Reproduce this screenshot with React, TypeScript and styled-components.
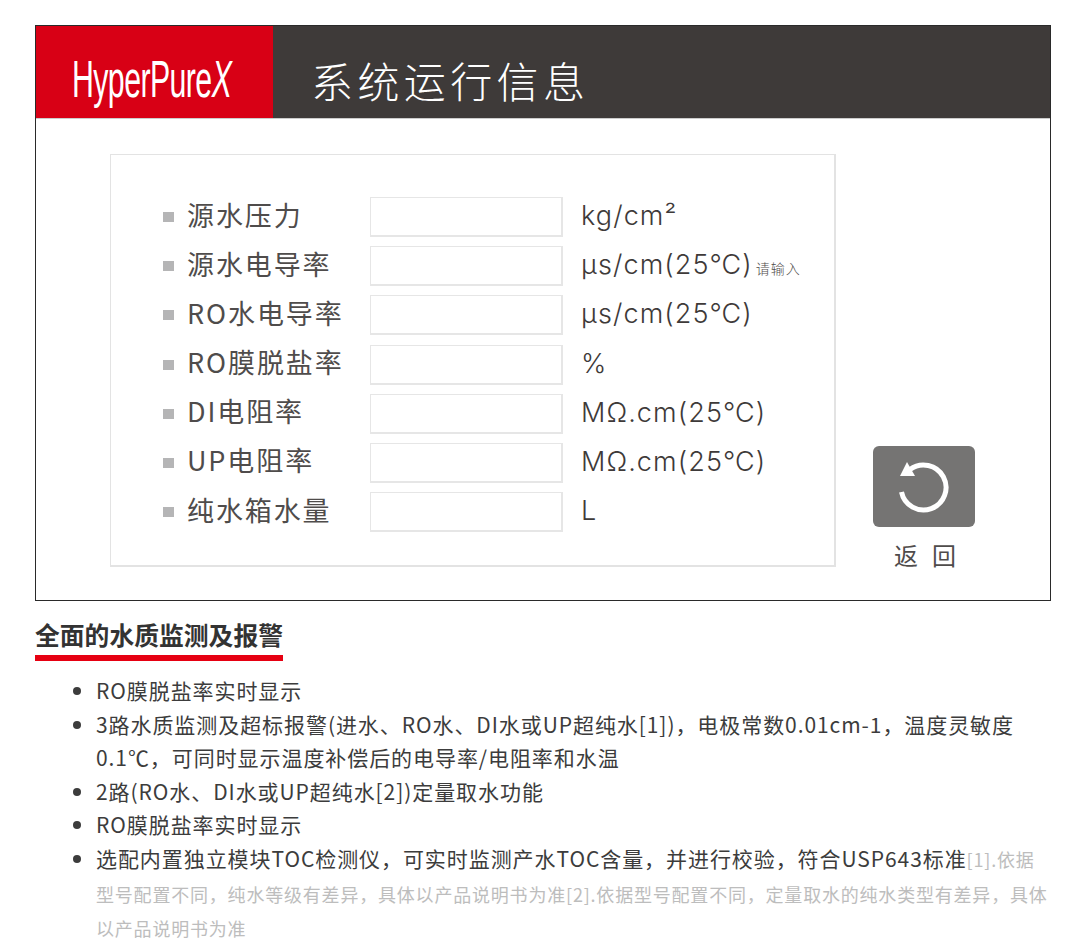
import React from "react";
import styled, { createGlobalStyle } from "styled-components";

const Global = createGlobalStyle`
  html, body { margin: 0; padding: 0; background: #fff; }
  body { font-family: "Noto Sans CJK SC", sans-serif; color: #3c3c3c; }
`;
const Page = styled.div`
  width: 1090px;
  height: 952px;
  padding: 25px 0 0 35px;
  box-sizing: border-box;
  overflow: hidden;
`;
const Frame = styled.section`
  width: 1016px;
  height: 576px;
  box-sizing: border-box;
  border: 1px solid #2a2a2a;
  display: flex;
  flex-direction: column;
`;
const Header = styled.header`
  height: 92px;
  flex: none;
  display: flex;
  background: #3e3a39;
  border-bottom: 1px solid #ccc;
  box-sizing: content-box;
`;
const Logo = styled.div`
  width: 237px;
  flex: none;
  background: #d80015;
  display: flex;
  align-items: center;
  justify-content: center;
  overflow: hidden;
`;
const LogoText = styled.span`
  display: inline-block;
  font-family: "Liberation Sans", sans-serif;
  font-size: 52px;
  line-height: 1;
  color: #fff;
  white-space: nowrap;
  letter-spacing: -1px;
  transform: translate(-3px, 7px) scaleX(0.583);
  em { font-style: italic; }
`;
const Title = styled.h1`
  margin: 0 0 0 38px;
  padding-top: 15px;
  font-family: "Noto Sans CJK SC", sans-serif;
  font-weight: 300;
  font-size: 42px;
  letter-spacing: 4.4px;
  line-height: 77px;
  color: #fff;
`;
const Body = styled.div`
  flex: 1;
  display: flex;
  padding: 35px 0 27px 74px;
`;
const Panel = styled.div`
  width: 726px;
  height: 413px;
  box-sizing: border-box;
  flex: none;
  border: 2px solid #e3e3e3;
  border-width: 1px 2px 2px 1px;
  padding: 42px 0 0 52px;
  display: flex;
  flex-direction: column;
  gap: 9.2px;
`;
const Row = styled.div`
  height: 40px;
  display: flex;
  align-items: center;
`;
const Square = styled.i`
  width: 11px;
  height: 10px;
  background: #b5b5b6;
  flex: none;
  margin-right: 14px;
`;
const Label = styled.span`
  width: 182px;
  flex: none;
  padding-bottom: 6px;
  margin-left: -1px;
  margin-right: 1px;
  font-size: 27px;
  letter-spacing: 1.9px;
  font-weight: 400;
  color: #4f4c4b;
  white-space: nowrap;
`;
const Field = styled.div`
  width: 193px;
  height: 40px;
  box-sizing: border-box;
  flex: none;
  border: 2px solid #e6e6e6;
  border-width: 1px 2px 2px 1px;
  margin-right: 18px;
`;
const Unit = styled.span`
  font-family: "Inter", sans-serif;
  font-weight: 300;
  font-size: 27px;
  letter-spacing: 1.1px;
  padding-bottom: 3px;
  color: #3e3a39;
  white-space: nowrap;
`;
const Hint = styled.small`
  font-family: "Noto Sans CJK SC", sans-serif;
  font-size: 14px;
  letter-spacing: 1px;
  margin-left: 3px;
  color: #4f4c4b;
`;
const Side = styled.div`
  width: 102px;
  margin-left: 37px;
  align-self: flex-end;
  display: flex;
  flex-direction: column;
  align-items: center;
`;
const BackButton = styled.button`
  width: 102px;
  height: 81px;
  padding: 0;
  border: 0;
  border-radius: 6px;
  background: #757473;
  display: flex;
  align-items: center;
  justify-content: center;
`;
const BackLabel = styled.span`
  margin-top: 10px;
  font-size: 24px;
  line-height: 36px;
  letter-spacing: 14px;
  margin-right: -16px;
  font-weight: 400;
  color: #4f4c4b;
`;
const Heading = styled.h2`
  display: inline-block;
  margin: 16px 0 0;
  font-size: 24.8px;
  line-height: 35px;
  padding-bottom: 3px;
  font-weight: 700;
  color: #333;
  border-bottom: 6px solid #e60012;
`;
const List = styled.ul`
  margin: 13px 0 0;
  padding: 0 0 0 61px;
  width: 1016px;
  box-sizing: border-box;
`;
const Item = styled.li`
  font-size: 21px;
  line-height: 33.6px;
  letter-spacing: 0.93px;
  color: #3c3c3c;
`;
const Note = styled.span`
  color: #bdbdbd;
  font-size: 18px;
  letter-spacing: 0.8px;
`;

const rows: { label: string; unit: React.ReactNode }[] = [
  { label: "源水压力", unit: "kg/cm²" },
  { label: "源水电导率", unit: <>μs/cm(25℃)<Hint>请输入</Hint></> },
  { label: "RO水电导率", unit: "μs/cm(25℃)" },
  { label: "RO膜脱盐率", unit: "%" },
  { label: "DI电阻率", unit: "MΩ.cm(25℃)" },
  { label: "UP电阻率", unit: "MΩ.cm(25℃)" },
  { label: "纯水箱水量", unit: "L" },
];

export default function App() {
  return (
    <Page>
      <Global />
      <Frame>
        <Header>
          <Logo><LogoText>HyperPure<em>X</em></LogoText></Logo>
          <Title>系统运行信息</Title>
        </Header>
        <Body>
          <Panel>
            {rows.map((r) => (
              <Row key={r.label}>
                <Square />
                <Label>{r.label}</Label>
                <Field />
                <Unit>{r.unit}</Unit>
              </Row>
            ))}
          </Panel>
          <Side>
            <BackButton aria-label="返回">
              <svg width="60" height="60" viewBox="-30 -30 60 60" fill="none">
                <path d="M-14 -17.5A22.5 22.5 0 1 1 -22.5 5" stroke="#fff" strokeWidth="5" />
                <path d="M-17 -25L-24 -11L-9 -11Z" fill="#fff" />
              </svg>
            </BackButton>
            <BackLabel>返回</BackLabel>
          </Side>
        </Body>
      </Frame>
      <Heading>全面的水质监测及报警</Heading>
      <List>
        <Item>RO膜脱盐率实时显示</Item>
        <Item>3路水质监测及超标报警(进水、RO水、DI水或UP超纯水[1])，电极常数0.01cm-1，温度灵敏度0.1℃，可同时显示温度补偿后的电导率/电阻率和水温</Item>
        <Item>2路(RO水、DI水或UP超纯水[2])定量取水功能</Item>
        <Item>RO膜脱盐率实时显示</Item>
        <Item>选配内置独立模块TOC检测仪，可实时监测产水TOC含量，并进行校验，符合USP643标准<Note>[1].依据型号配置不同，纯水等级有差异，具体以产品说明书为准[2].依据型号配置不同，定量取水的纯水类型有差异，具体以产品说明书为准</Note></Item>
      </List>
    </Page>
  );
}
